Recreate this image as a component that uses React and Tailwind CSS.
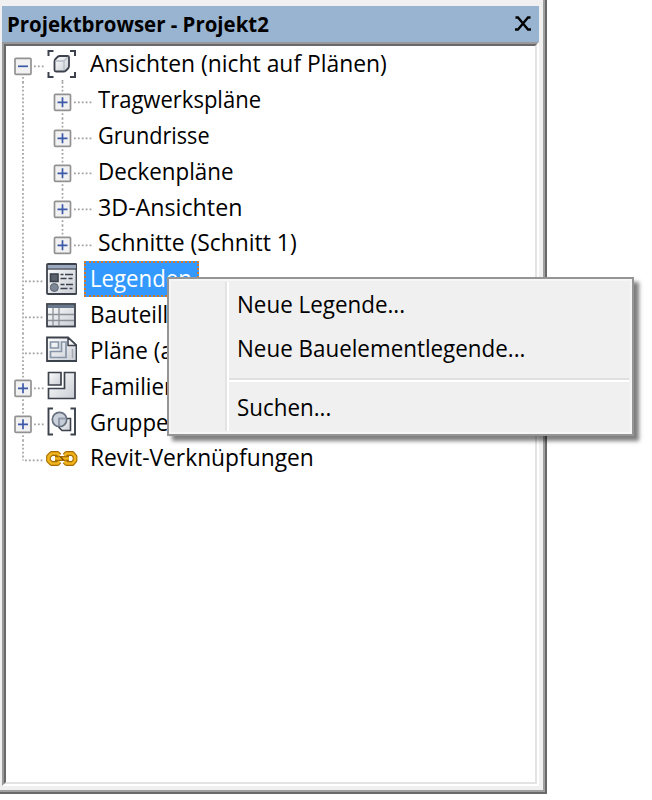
import React from 'react';

const line = '#3c424c';
const dots = { stroke: '#a2a2a2', strokeWidth: 1.7, strokeDasharray: '1.8 2.1', fill: 'none' };

const Gradient = ({ id }) => (
  <defs>
    <linearGradient id={id} x1="0" y1="0" x2="1" y2="1">
      <stop offset="0" stopColor="#ffffff" />
      <stop offset="1" stopColor="#c9cdd4" />
    </linearGradient>
  </defs>
);

function ViewsIcon() {
  return (
    <svg width="32" height="32" viewBox="0 0 32 32" fill="none" className="shrink-0">
      <Gradient id="views" />
      <path d="M8.500 3H3.500v5M25 3h5v5M3.500 24v5h5M30 24v5h-5" stroke={line} strokeWidth="2" />
      <path d="M9.500 13.500q0-1.500 1-2.500l2-2q1-1 2.500-1h7.500q1.500 0 1.500 1.500v8.500q0 1.500-1 2.500l-2 2q-1 1-2.500 1h-7.500q-1.500 0-1.500-1.500z" fill="url(#views)" stroke={line} strokeWidth="1.800" />
      <path d="M10.500 13h7.500q1 0 1 1v8.500M19 13l4-4" stroke="#b5bac2" strokeWidth="1.300" />
    </svg>
  );
}

function LegendIcon() {
  return (
    <svg width="32" height="32" viewBox="0 0 32 32" fill="none" className="shrink-0">
      <Gradient id="legend" />
      <rect x="2" y="1" width="29.500" height="30" rx="1" fill="url(#legend)" stroke={line} strokeWidth="1.800" />
      <path d="M3 2h27.500v3.500H3z" fill="#9aa9c0" />
      <path d="M2 6h29" stroke={line} strokeWidth="1.300" />
      <rect x="5.500" y="11" width="7.500" height="7.500" fill="#59616d" stroke={line} strokeWidth="1.600" />
      <circle cx="9.300" cy="24.500" r="4" fill="#7d8896" stroke="#59616d" />
      <path d="M15.500 11.500h3M20 11.500h8M15.500 15.500h6M23.500 15.500h4M15.500 21.500h4M21 21.500h7M15.500 25.500h7M24.500 25.500h3" stroke={line} strokeWidth="1.500" />
    </svg>
  );
}

function ScheduleIcon() {
  return (
    <svg width="32" height="32" viewBox="0 0 32 32" fill="none" className="shrink-0">
      <Gradient id="schedule" />
      <rect x="2" y="5" width="28" height="22.500" fill="url(#schedule)" stroke={line} strokeWidth="1.800" />
      <path d="M3 6h26v3H3z" fill="#66788c" />
      <path d="M3 15.500h26M3 21.500h26M8 9v18M14 9v18" stroke="#8c9199" strokeWidth="1.300" />
    </svg>
  );
}

function SheetIcon() {
  return (
    <svg width="32" height="32" viewBox="0 0 32 32" fill="none" className="shrink-0">
      <Gradient id="sheet" />
      <path d="M2 3.500h21l8.500 8V27H2z" fill="url(#sheet)" stroke={line} strokeWidth="1.800" />
      <path d="M23 3.500v8h8.500z" fill="#f4f5f7" stroke={line} strokeWidth="1.500" strokeLinejoin="round" />
      <path d="M5.500 8h8v6h-8zM16.500 8h4.500v15.500H5.500V17.500h11z" stroke="#8795a8" strokeWidth="1.700" />
      <path d="M27.500 15v9" stroke="#a4aab3" strokeWidth="1.500" />
    </svg>
  );
}

function FamilyIcon() {
  return (
    <svg width="32" height="32" viewBox="0 0 32 32" fill="none" className="shrink-0">
      <Gradient id="family" />
      <path d="M3.500 2.500H16V15H3.500z" fill="url(#family)" stroke={line} strokeWidth="1.700" />
      <path d="M19.500 2.500H30v26H3.500V18.500h16z" fill="url(#family)" stroke={line} strokeWidth="1.700" />
    </svg>
  );
}

function GroupIcon() {
  return (
    <svg width="32" height="32" viewBox="0 0 32 32" fill="none" className="shrink-0">
      <Gradient id="group" />
      <path d="M8 2.500H3.500v26H8M25.500 2.500H30v26h-4.500" stroke={line} strokeWidth="1.900" />
      <path d="M14 12.500h11.500v12H17l-3-3z" fill="url(#group)" stroke={line} strokeWidth="1.600" />
      <circle cx="14.500" cy="13.500" r="7.200" fill="#aeb9c8" fillOpacity=".65" stroke="#68717f" strokeWidth="1.700" />
      <path d="M14 20V12.500h7" stroke="#8f9aab" strokeWidth="1.400" />
    </svg>
  );
}

// Two interlocked chain links
const chain =
  'M14.500 13.500l-2-2h-6l-3 3v4l3 3h6l2-2M19.500 13.500l2-2h6l2.500 3v4l-2.500 3h-6l-2-2M10 16.500h14';

function LinkIcon() {
  return (
    <svg width="32" height="32" viewBox="0 0 32 32" fill="none" className="shrink-0 overflow-visible">
      <path d={chain} stroke="#a66b00" strokeWidth="4.800" strokeLinejoin="round" />
      <path d={chain} stroke="#f0b41c" strokeWidth="2.600" strokeLinejoin="round" />
      <path d="M15.500 14.500l3 4" stroke="#8a5600" strokeWidth="1.500" />
    </svg>
  );
}

const items = [
  { label: 'Ansichten (nicht auf Plänen)', icon: ViewsIcon, toggle: 'minus', fit: 'scale-x-[.994]' },
  { label: 'Tragwerkspläne', level: 1, fit: 'scale-x-[.958]' },
  { label: 'Grundrisse', level: 1, fit: 'scale-x-[.942]' },
  { label: 'Deckenpläne', level: 1, fit: 'scale-x-[.972]' },
  { label: '3D-Ansichten', level: 1, fit: 'scale-x-[1.01]' },
  { label: 'Schnitte (Schnitt 1)', level: 1, end: true, fit: 'scale-x-[.995]' },
  { label: 'Legenden', icon: LegendIcon, selected: true, fit: 'scale-x-[.965]' },
  { label: 'Bauteillisten', icon: ScheduleIcon, fit: 'scale-x-[.975]' },
  { label: 'Pläne (alle)', icon: SheetIcon, fit: 'scale-x-[.975]' },
  { label: 'Familien', icon: FamilyIcon, toggle: 'plus', fit: 'scale-x-[.97]' },
  { label: 'Gruppen', icon: GroupIcon, toggle: 'plus', fit: 'scale-x-[.965]' },
  { label: 'Revit-Verknüpfungen', icon: LinkIcon, end: true, fit: 'scale-x-[.991]' },
];

function Toggle({ x, minus }) {
  return (
    <g transform={`translate(${x} 20.3)`}>
      <rect x="-10" y="-10" width="20" height="20" fill="#fff" />
      <rect x="-8" y="-8" width="16" height="16" rx="1" fill="#f1f1f1" stroke="#929292" strokeWidth="1.700" />
      <path d={minus ? 'M-5 0h10' : 'M-5 0h10M0-5v10'} stroke="#3d5aa8" strokeWidth="1.700" />
    </g>
  );
}

// Dotted guide lines and the expand box in front of each label
function Guides({ item, first }) {
  const sub = item.level === 1;
  return (
    <svg width={sub ? 86 : 39} height="35.820" className="shrink-0 overflow-visible">
      {!first && <path d={item.end && !sub ? 'M17 0v20.500' : 'M17 0v35.800'} {...dots} />}
      {first && <path d="M17 31v5M56.500 34v2" {...dots} />}
      {sub && <path d={item.end ? 'M56.500 0v20' : 'M56.500 0v35.800'} {...dots} />}
      <path d={sub ? 'M68 20.300h18' : item.toggle ? 'M28 20.300h10' : 'M19 20.300h19'} {...dots} />
      {sub && <Toggle x={56.500} />}
      {item.toggle && <Toggle x={17} minus={item.toggle === 'minus'} />}
    </svg>
  );
}

function TreeRow({ item, first }) {
  const Icon = item.icon;
  return (
    <div className="flex h-[35.82px] items-center">
      <Guides item={item} first={first} />
      {Icon && <Icon />}
      {item.selected ? (
        <span className="ml-[7px] flex h-9 w-[115px] items-center border-2 border-dotted border-[#d5782a] bg-[#3399ff] pl-1 text-white">
          <span className={`block origin-left ${item.fit}`}>{item.label}</span>
        </span>
      ) : (
        <span className={`block origin-left ${item.level ? 'ml-1.5' : 'ml-[13px]'} ${item.fit}`}>{item.label}</span>
      )}
    </div>
  );
}

function MenuItem({ children }) {
  return (
    <div className="flex h-[44px] items-center pl-2">
      <span className="origin-left scale-x-[.973]">{children}</span>
    </div>
  );
}

function ContextMenu() {
  return (
    <div className="absolute top-[277px] left-[167px] flex h-[159px] w-[467px] border-2 border-[#959595] bg-[#f0f0f0] p-[3px] shadow-[5px_5px_4px_rgba(0,0,0,0.5)] outline-2 -outline-offset-4 outline-[#f6f6f6]">
      <div className="w-[55px] border-r-2 border-[#e2e3e3]" />
      <div className="flex-1 border-l-2 border-white">
        <MenuItem>Neue Legende...</MenuItem>
        <MenuItem>Neue Bauelementlegende...</MenuItem>
        <div className="mt-2 mb-[3px] h-1 border-t-2 border-b-2 border-t-[#e0e0e0] border-b-white" />
        <MenuItem>Suchen...</MenuItem>
      </div>
    </div>
  );
}

export default function App() {
  return (
    <div className="relative h-[800px] w-[652px] overflow-hidden bg-white font-['Open_Sans',sans-serif] text-[23px] leading-none whitespace-nowrap text-black">
      <div className="w-[547px] border-r-2 border-b-2 border-[#696969]">
        <div className="flex h-[792px] flex-col border-r-2 border-b-2 border-[#a0a0a0] bg-[#f0f0f0] pt-1.5 pl-0.5">
          <div className="flex h-9 w-[537px] items-center justify-between bg-[#99b4d1] pr-[7px] pl-[5px]">
            <span className="origin-left scale-x-[.95] text-[21.5px] font-bold">Projektbrowser - Projekt2</span>
            <svg width="18" height="16" viewBox="0 0 18 16">
              <path d="M1.500 1.500H4L14 13.500h3M16.500 1.500H14L4 13.500H1" stroke="#000" strokeWidth="2.300" fill="none" />
            </svg>
          </div>
          <div className="h-[744px] w-[537px] border-2 border-t-[#999] border-r-white border-b-white border-l-[#999]">
            <div className="h-full border-2 border-t-[#696969] border-r-[#e3e3e3] border-b-[#e3e3e3] border-l-[#696969] bg-white">
              {items.map((item, i) => (
                <TreeRow key={item.label} item={item} first={i === 0} />
              ))}
            </div>
          </div>
        </div>
      </div>
      <ContextMenu />
    </div>
  );
}
